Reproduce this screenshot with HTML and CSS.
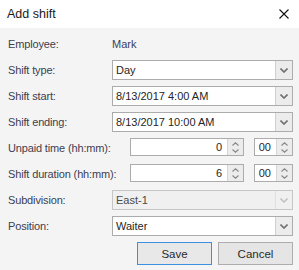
FILE: index.html
```html
<!DOCTYPE html>
<html>
<head>
<meta charset="utf-8">
<link rel="stylesheet" href="styles.css">
</head>
<body>
<div class="dialog">
  <div class="titlebar">
    <span class="title">Add shift</span>
    <svg class="close" width="10" height="10" viewBox="0 0 10 10"><path d="M0.5 0.5L9.5 9.5M9.5 0.5L0.5 9.5" stroke="#111" stroke-width="1.1" fill="none"/></svg>
  </div>
  <div class="body">
    <div class="form">
      <div class="label">Employee:</div>
      <div class="value">Mark</div>

      <div class="label">Shift type:</div>
      <div class="combo"><span class="text">Day</span><span class="arrow"><svg width="8" height="5" viewBox="0 0 8 5"><path d="M0.5 0.5L4 4L7.5 0.5" stroke="#6f6f6f" stroke-width="1.6" fill="none"/></svg></span></div>

      <div class="label">Shift start:</div>
      <div class="combo"><span class="text">8/13/2017 4:00 AM</span><span class="arrow"><svg width="8" height="5" viewBox="0 0 8 5"><path d="M0.5 0.5L4 4L7.5 0.5" stroke="#6f6f6f" stroke-width="1.6" fill="none"/></svg></span></div>

      <div class="label">Shift ending:</div>
      <div class="combo"><span class="text">8/13/2017 10:00 AM</span><span class="arrow"><svg width="8" height="5" viewBox="0 0 8 5"><path d="M0.5 0.5L4 4L7.5 0.5" stroke="#6f6f6f" stroke-width="1.6" fill="none"/></svg></span></div>

      <div class="label">Unpaid time (hh:mm):</div>
      <div class="spins">
        <div class="spin hours"><span class="num">0</span><span class="btns"><svg width="7" height="4" viewBox="0 0 7 4"><path d="M0.5 3.5L3.5 0.8L6.5 3.5" stroke="#8a8a8a" stroke-width="1.2" fill="none"/></svg><svg width="7" height="4" viewBox="0 0 7 4"><path d="M0.5 0.5L3.5 3.2L6.5 0.5" stroke="#8a8a8a" stroke-width="1.2" fill="none"/></svg></span></div>
        <div class="spin mins"><span class="num">00</span><span class="btns"><svg width="7" height="4" viewBox="0 0 7 4"><path d="M0.5 3.5L3.5 0.8L6.5 3.5" stroke="#8a8a8a" stroke-width="1.2" fill="none"/></svg><svg width="7" height="4" viewBox="0 0 7 4"><path d="M0.5 0.5L3.5 3.2L6.5 0.5" stroke="#8a8a8a" stroke-width="1.2" fill="none"/></svg></span></div>
      </div>

      <div class="label">Shift duration (hh:mm):</div>
      <div class="spins">
        <div class="spin hours"><span class="num">6</span><span class="btns"><svg width="7" height="4" viewBox="0 0 7 4"><path d="M0.5 3.5L3.5 0.8L6.5 3.5" stroke="#8a8a8a" stroke-width="1.2" fill="none"/></svg><svg width="7" height="4" viewBox="0 0 7 4"><path d="M0.5 0.5L3.5 3.2L6.5 0.5" stroke="#8a8a8a" stroke-width="1.2" fill="none"/></svg></span></div>
        <div class="spin mins"><span class="num">00</span><span class="btns"><svg width="7" height="4" viewBox="0 0 7 4"><path d="M0.5 3.5L3.5 0.8L6.5 3.5" stroke="#8a8a8a" stroke-width="1.2" fill="none"/></svg><svg width="7" height="4" viewBox="0 0 7 4"><path d="M0.5 0.5L3.5 3.2L6.5 0.5" stroke="#8a8a8a" stroke-width="1.2" fill="none"/></svg></span></div>
      </div>

      <div class="label">Subdivision:</div>
      <div class="combo disabled"><span class="text">East-1</span><span class="arrow"><svg width="8" height="5" viewBox="0 0 8 5"><path d="M0.5 0.5L4 4L7.5 0.5" stroke="#c4c4c4" stroke-width="1.6" fill="none"/></svg></span></div>

      <div class="label">Position:</div>
      <div class="combo"><span class="text">Waiter</span><span class="arrow"><svg width="8" height="5" viewBox="0 0 8 5"><path d="M0.5 0.5L4 4L7.5 0.5" stroke="#6f6f6f" stroke-width="1.6" fill="none"/></svg></span></div>
    </div>
    <div class="buttons">
      <div class="btn primary">Save</div>
      <div class="btn">Cancel</div>
    </div>
  </div>
</div>
</body>
</html>
```

FILE: styles.css
```css
html, body {
  margin: 0;
  padding: 0;
}
body {
  width: 299px;
  height: 270px;
  overflow: hidden;
  font-family: "Liberation Sans", Arial, sans-serif;
  background: #f4f4f4;
}
.dialog {
  width: 299px;
  height: 270px;
  display: flex;
  flex-direction: column;
}
.titlebar {
  height: 28px;
  background: #ffffff;
  display: flex;
  align-items: center;
  justify-content: space-between;
  padding: 0 10px 0 7px;
  box-sizing: border-box;
}
.title {
  font-size: 12.5px;
  color: #1a1a1a;
}
.close {
  display: block;
  margin-top: -1px;
}
.body {
  flex: 1;
  background: #f4f4f4;
  padding: 6px 6px 0 8px;
}
.form {
  display: grid;
  grid-template-columns: 104px 181px;
  grid-auto-rows: 20px;
  row-gap: 6px;
}
.label {
  font-size: 11px;
  letter-spacing: -0.15px;
  color: #40404f;
  display: flex;
  align-items: center;
  white-space: nowrap;
}
.value {
  font-size: 11px;
  color: #3e3e5a;
  display: flex;
  align-items: center;
}
.combo {
  display: flex;
  border: 1px solid #acacac;
  background: #ffffff;
  box-sizing: border-box;
  height: 20px;
}
.combo .text {
  flex: 1;
  font-size: 11px;
  color: #262626;
  padding-left: 3px;
  display: flex;
  align-items: center;
}
.combo .arrow {
  width: 16px;
  border-left: 1px solid #d0d0d0;
  background: #ececec;
  display: flex;
  align-items: center;
  justify-content: center;
}
.combo.disabled {
  background: #f0f0f0;
  border-color: #c6c6c6;
}
.combo.disabled .text {
  color: #4a4a4a;
}
.combo.disabled .arrow {
  background: #f0f0f0;
  border-left-color: #e0e0e0;
}
.spins {
  display: flex;
  align-items: flex-start;
  padding-left: 18px;
  gap: 10px;
}
.spin {
  display: flex;
  height: 18px;
  box-sizing: border-box;
  border: 1px solid #acacac;
  background: #ffffff;
}
.spin.hours {
  width: 114px;
}
.spin.mins {
  width: 39px;
}
.spin .num {
  flex: 1;
  font-size: 11px;
  color: #262626;
  padding-right: 5px;
  display: flex;
  align-items: center;
  justify-content: flex-end;
}
.spin .btns {
  width: 15px;
  background: #ececec;
  border-left: 1px solid #d6d6d6;
  display: flex;
  flex-direction: column;
  align-items: center;
  justify-content: center;
  gap: 3px;
}
.spin .btns svg {
  display: block;
}
.buttons {
  display: flex;
  justify-content: flex-end;
  gap: 6px;
  margin-top: 6px;
}
.btn {
  width: 75px;
  height: 23px;
  box-sizing: border-box;
  border: 1px solid #adadad;
  background: #e5e5e5;
  font-size: 11.5px;
  color: #2a2a2a;
  display: flex;
  align-items: center;
  justify-content: center;
}
.btn.primary {
  border-color: #3d8fe0;
  background: #e8e8e8;
}
```
